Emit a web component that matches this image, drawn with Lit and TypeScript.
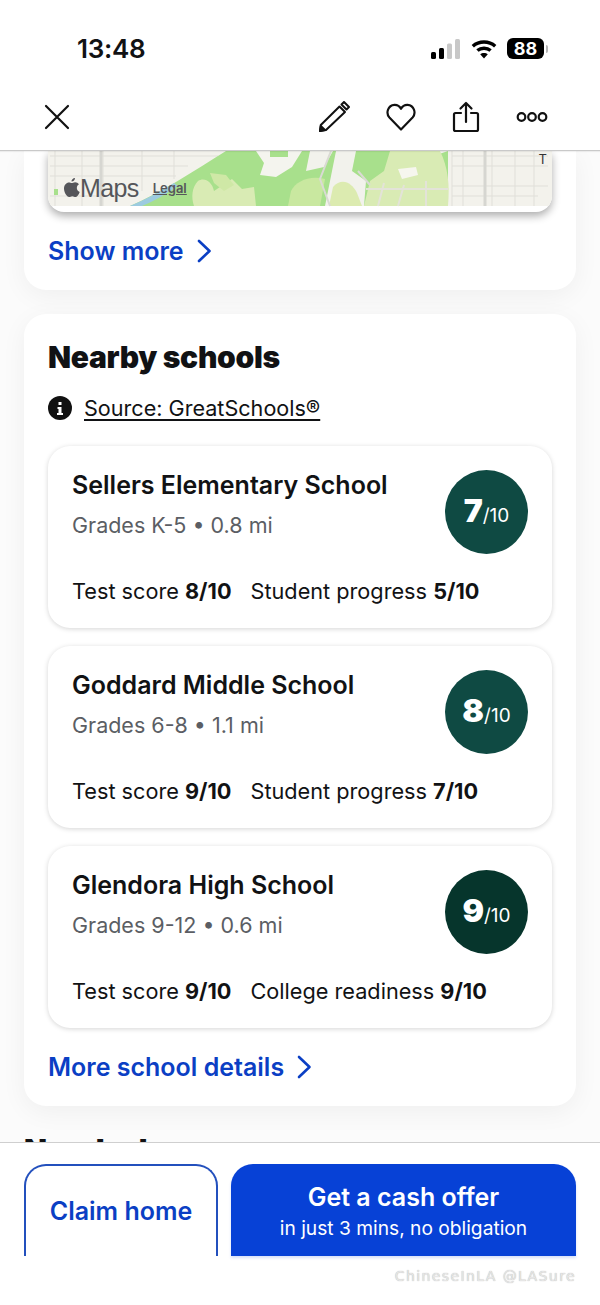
// app.ts
// Home listing page: nearby schools section with sticky action bar

import { LitElement, html, css, svg } from 'lit';
import { customElement } from 'lit/decorators.js';

interface School {
  name: string;
  meta: string;
  rating: number;
  color: string;
  stats: [string, string][];
}

const SCHOOLS: School[] = [
  {
    name: 'Sellers Elementary School',
    meta: 'Grades K-5 • 0.8 mi',
    rating: 7,
    color: '#0f4a43',
    stats: [['Test score', '8/10'], ['Student progress', '5/10']],
  },
  {
    name: 'Goddard Middle School',
    meta: 'Grades 6-8 • 1.1 mi',
    rating: 8,
    color: '#0f4a43',
    stats: [['Test score', '9/10'], ['Student progress', '7/10']],
  },
  {
    name: 'Glendora High School',
    meta: 'Grades 9-12 • 0.6 mi',
    rating: 9,
    color: '#06352c',
    stats: [['Test score', '9/10'], ['College readiness', '9/10']],
  },
];

const chevron = html`<svg class="chevron" width="16" height="24" viewBox="0 0 16 24" fill="none">
  <path d="M3 2l10.5 10L3 22" stroke="currentColor" stroke-width="2.6" stroke-linecap="round" stroke-linejoin="round" />
</svg>`;

// Map tile, just the big shapes and a road grid on both sides
const mapTile = svg`
  <rect width="504" height="55" fill="#f3f2ec" />
  <g stroke="#e0dfd9" stroke-width="1" fill="none">
    <path d="M7 0V55M34 0V55M55 0V55M94 0V40M126 0V28M2 5H170M2 15H140M2 25H128M2 45H60" />
    <path d="M404 0V55M415 0V55M444 0V55M467 0V55M486 0V55M404 5H500M404 15H500M404 35H500M404 45H490" />
  </g>
  <path d="M53 0V55M437 0V55" stroke="#d6d6d1" stroke-width="3" fill="none" />

  <path d="M82 55C112 42 146 20 178 0H342V20L400 0V55H82Z" fill="#a8e08c" />
  <path d="M342 0H392C400 16 402 34 400 55H316L322 30 336 20Z" fill="#d9ebb4" />
  <path d="M277 55L288 0H308L304 20 318 30 316 55Z" fill="#f2f2ec" />
  <path d="M208 0H222V6H240V0H254L244 16 228 26 212 24 216 12Z" fill="#f4f4ee" />
  <path d="M262 0H285L276 16 258 20Z" fill="#f2f2ec" />
  <path d="M285 36C294 26 304 32 309 42L314 55H281Z" fill="#dcebb0" />
  <path d="M150 30C156 26 164 30 166 40L184 28 194 38 206 36 208 55H146C143 46 144 36 150 30Z" fill="#d9ebb4" />
  <path d="M162 22L178 24 186 34 176 40 166 32Z" fill="#cfe8a6" />
  <path d="M243 40C248 30 262 24 277 28L272 55H240Z" fill="#c9e8a0" />
  <path d="M350 18L368 16 370 24 354 28Z" fill="#f6f6ee" />
  <path d="M318 38H400M336 32L330 55M356 34L350 55M378 30V55" stroke="#e3e3d8" stroke-width="2" fill="none" />
  <path d="M283 0L272 28 282 55M310 20L322 34" stroke="#dadad4" stroke-width="2" fill="none" />
  <path d="M82 55C96 49 112 41 126 32L130 35C118 43 106 50 94 55Z" fill="#9ccbe0" />
  <rect x="6" y="38" width="4" height="6" fill="#a8e08c" />
`;

@customElement('app-root')
export class AppRoot extends LitElement {
  static styles = css`
    :host {
      display: flex;
      flex-direction: column;
      width: 600px;
      height: 1305px;
      overflow: hidden;
      background: #fbfbfb;
      font-family: Inter, 'Liberation Sans', sans-serif;
      color: #111214;
    }

    /* Top chrome */
    .chrome {
      flex: none;
      background: #fff;
      border-bottom: 1px solid #c9c9c9;
      box-shadow: 0 1px 1px rgba(0, 0, 0, 0.06);
      position: relative;
      z-index: 2;
    }
    .status {
      height: 84px;
      padding: 13px 52px 0 77px;
      box-sizing: border-box;
      display: flex;
      align-items: center;
      justify-content: space-between;
    }
    .time {
      font-size: 26px;
      font-weight: 600;
      letter-spacing: -0.3px;
    }
    .status-icons {
      display: flex;
      align-items: center;
      gap: 10px;
    }
    .battery {
      display: flex;
      align-items: center;
      gap: 2px;
    }
    .battery-body {
      width: 37px;
      height: 21px;
      border-radius: 6px;
      background: #000;
      color: #fff;
      font-size: 18px;
      font-weight: 700;
      line-height: 21px;
      text-align: center;
    }
    .battery-nub {
      width: 2px;
      height: 8px;
      border-radius: 0 2px 2px 0;
      background: #b5b5b5;
    }
    .toolbar {
      height: 66px;
      padding: 0 52px 0 44px;
      box-sizing: border-box;
      display: flex;
      align-items: center;
      justify-content: space-between;
    }
    .actions {
      display: flex;
      align-items: center;
      gap: 36px;
    }
    .toolbar svg {
      display: block;
    }

    /* Scrolling content */
    .content {
      flex: 1;
      min-height: 0;
      overflow: hidden;
      padding: 0 24px;
    }
    .card {
      background: #fff;
      border-radius: 22px;
      box-shadow: 0 6px 26px rgba(0, 0, 0, 0.05);
      padding: 0 24px;
    }
    .card.map-card {
      height: 139px;
      border-radius: 0 0 22px 22px;
      box-sizing: border-box;
    }
    .map {
      position: relative;
      height: 61px;
      background: #fff;
      border-radius: 0 0 16px 16px;
      overflow: hidden;
      box-shadow: 0 4px 9px rgba(0, 0, 0, 0.32);
    }
    .map > svg {
      display: block;
    }
    .map-label {
      position: absolute;
      left: 15px;
      top: 22px;
      display: flex;
      align-items: center;
      color: #55565a;
    }
    .map-name {
      font-size: 25px;
      letter-spacing: -0.6px;
      font-family: 'Liberation Sans', sans-serif;
      line-height: 30px;
    }
    .map-legal {
      margin: 0 0 0 14px;
      font-size: 13px;
      font-weight: 600;
      text-decoration: underline;
    }
    .map-pin-label {
      position: absolute;
      right: 5px;
      top: 0;
      font-size: 13px;
      line-height: 16px;
      color: #333;
    }
    .link {
      display: flex;
      align-items: center;
      gap: 12px;
      color: #0b3fc4;
      font-size: 25px;
      font-weight: 600;
      line-height: 32px;
    }
    .map-card .link {
      margin-top: 23px;
    }

    .schools {
      margin-top: 24px;
      height: 792px;
      box-sizing: border-box;
      padding-top: 24px;
    }
    h2 {
      margin: 0;
      font-size: 30px;
      font-weight: 900;
      line-height: 38px;
      letter-spacing: -0.3px;
    }
    .source {
      display: flex;
      align-items: center;
      gap: 12px;
      margin-top: 18px;
      font-size: 21.6px;
      line-height: 28px;
    }
    .source span {
      text-decoration: underline;
      text-underline-offset: 3px;
    }
    .school-list {
      display: flex;
      flex-direction: column;
      gap: 18px;
      margin-top: 24px;
    }
    .school {
      height: 182px;
      box-sizing: border-box;
      padding: 24px 24px 0;
      border-radius: 22px;
      background: #fff;
      box-shadow: 0 1px 5px rgba(0, 0, 0, 0.17);
    }
    .school-top {
      display: flex;
      justify-content: space-between;
      align-items: flex-start;
    }
    .school-name {
      font-size: 25px;
      font-weight: 600;
      line-height: 30px;
    }
    .school-meta {
      margin-top: 10px;
      font-size: 21.5px;
      line-height: 30px;
      color: #5b5e64;
    }
    .badge {
      flex: none;
      width: 83px;
      height: 84px;
      border-radius: 50%;
      color: #fff;
      display: flex;
      align-items: baseline;
      justify-content: center;
      line-height: 82px;
    }
    .badge b {
      font-size: 32px;
      font-weight: 900;
    }
    .badge span {
      font-size: 19px;
    }
    .school-stats {
      display: flex;
      gap: 19px;
      margin-top: 22px;
      font-size: 21.7px;
      line-height: 30px;
    }
    .school-stats b {
      font-weight: 700;
    }
    .more {
      margin-top: 23px;
    }
    .next-title {
      margin-top: 25px;
    }

    /* Bottom action bar */
    .bar {
      flex: none;
      height: 163px;
      box-sizing: border-box;
      background: #fff;
      border-top: 1px solid #cfcfcf;
      padding: 21px 24px 0;
      position: relative;
      z-index: 2;
    }
    .bar-buttons {
      display: grid;
      grid-template-columns: 194px 345px;
      gap: 13px;
    }
    .btn {
      height: 92px;
      box-sizing: border-box;
      border-radius: 22px 22px 0 0;
      display: flex;
      flex-direction: column;
      align-items: center;
      justify-content: center;
    }
    .btn.outline {
      border: 2px solid #2350bd;
      border-bottom: 0;
      color: #0b3fc4;
      font-size: 25px;
      font-weight: 600;
    }
    .btn.solid {
      background: #0741d6;
      color: #fff;
      padding-top: 1px;
      box-shadow: 0 2px 3px rgba(7, 65, 214, 0.16);
    }
    .btn-title {
      font-size: 25px;
      font-weight: 600;
      line-height: 32px;
    }
    .btn-sub {
      margin-top: 2px;
      font-size: 19.2px;
      line-height: 26px;
    }
    .watermark {
      margin-top: 10px;
      text-align: right;
      font-family: 'DejaVu Sans', sans-serif;
      font-size: 14px;
      line-height: 20px;
      letter-spacing: 1.4px;
      color: #e6e6e6;
      text-shadow: 0 0 1px #a8a8a8;
    }
  `;

  private renderStatusBar() {
    return html`
      <div class="status">
        <div class="time">13:48</div>
        <div class="status-icons">
          <svg width="30" height="20" viewBox="0 0 30 20">
            <rect x="0" y="13" width="5" height="7" rx="1.5" fill="#000" />
            <rect x="8" y="9" width="5" height="11" rx="1.5" fill="#000" />
            <rect x="16" y="4.5" width="5" height="15.5" rx="1.5" fill="#c8c8c8" />
            <rect x="24" y="0" width="5" height="20" rx="1.5" fill="#c8c8c8" />
          </svg>
          <svg width="26" height="20" viewBox="0 0 26 20" fill="none" stroke="#000" stroke-width="3.4">
            <path d="M1.8 7.2C8 1.6 18 1.6 24.2 7.2" />
            <path d="M6.4 11.6C10 8.4 16 8.4 19.6 11.6" />
            <path d="M13 19.6L9.2 15.2C11.2 13.6 14.8 13.6 16.8 15.2Z" fill="#000" stroke="none" />
          </svg>
          <div class="battery">
            <div class="battery-body">88</div>
            <div class="battery-nub"></div>
          </div>
        </div>
      </div>
    `;
  }

  private renderToolbar() {
    return html`
      <div class="toolbar">
        <svg width="26" height="26" viewBox="0 0 26 26" fill="none" stroke="#111" stroke-width="2.2" stroke-linecap="round">
          <path d="M2 2l22 22M24 2L2 24" />
        </svg>
        <div class="actions">
          <svg width="32" height="32" viewBox="0 0 32 32" fill="none" stroke="#111" stroke-width="2" stroke-linejoin="round">
            <path d="M2 30l.8-6L21.5 5.500 27 11 8 29z" />
            <path d="M23.500 3.500L26 1l5 5-2.500 2.500z" />
            <path d="M2 30l.8-5 4.200 4z" fill="#111" />
          </svg>
          <svg width="30" height="28" viewBox="0 0 32 30" fill="none" stroke="#111" stroke-width="2.300" stroke-linejoin="round">
            <path d="M16 28.500L3.600 15.600C-.6 10.800 2 2.400 9 2c3.200-.1 5.600 1.500 7 4.200C17.400 3.500 19.800 1.900 23 2c7 .4 9.600 8.800 5.400 13.600z" />
          </svg>
          <svg width="28" height="32" viewBox="0 0 28 32" fill="none" stroke="#111" stroke-width="2.200" stroke-linecap="round" stroke-linejoin="round">
            <path d="M9 12H3.500a1.500 1.500 0 0 0-1.500 1.500v15A1.500 1.500 0 0 0 3.500 30h21a1.500 1.500 0 0 0 1.500-1.500v-15a1.500 1.500 0 0 0-1.500-1.500H19" />
            <path d="M14 21V2M8.500 7.500L14 2l5.500 5.500" />
          </svg>
          <svg width="32" height="12" viewBox="0 0 32 12" fill="none" stroke="#111" stroke-width="2.200">
            <circle cx="5.500" cy="6" r="3.800" />
            <circle cx="16" cy="6" r="3.800" />
            <circle cx="26.500" cy="6" r="3.800" />
          </svg>
        </div>
      </div>
    `;
  }

  private renderMapCard() {
    return html`
      <section class="card map-card">
        <div class="map">
          <svg width="504" height="61" viewBox="0 0 504 61">${mapTile}</svg>
          <div class="map-label">
            <svg width="17" height="22" viewBox="0 0 17 22" fill="currentColor">
              <path d="M12 1c.1 1.800-1.500 3.700-3.500 3.600C8.300 2.800 10 1.100 12 1zM8.600 6c1 0 2-.8 3.500-.8 1.500 0 3 .8 3.900 2.100-3.200 1.900-2.700 6.300.7 7.600-.7 2-2.400 5.100-4.200 5.100-1.200 0-1.700-.8-3.200-.8s-2 .8-3.200.8C3.900 20 1 15.600 1 11.600 1 7.700 3.500 5.400 6 5.400c1.100 0 1.900.6 2.600.6z" />
            </svg>
            <span class="map-name">Maps</span>
            <span class="map-legal">Legal</span>
          </div>
          <span class="map-pin-label">T</span>
        </div>
        <div class="link">Show more ${chevron}</div>
      </section>
    `;
  }

  private renderSchool(school: School) {
    return html`
      <article class="school">
        <div class="school-top">
          <div>
            <div class="school-name">${school.name}</div>
            <div class="school-meta">${school.meta}</div>
          </div>
          <div class="badge" style="background: ${school.color}">
            <b>${school.rating}</b><span>/10</span>
          </div>
        </div>
        <div class="school-stats">
          ${school.stats.map(([label, value]) => html`<div>${label} <b>${value}</b></div>`)}
        </div>
      </article>
    `;
  }

  render() {
    return html`
      <header class="chrome">
        ${this.renderStatusBar()}
        ${this.renderToolbar()}
      </header>

      <main class="content">
        ${this.renderMapCard()}
        <section class="card schools">
          <h2>Nearby schools</h2>
          <div class="source">
            <svg width="24" height="24" viewBox="0 0 24 24">
              <circle cx="12" cy="12" r="12" fill="#111" />
              <path d="M10.500 6h3v3h-3zM9.500 11h4v6h1.500v2H9v-2h1.500v-4h-1z" fill="#fff" />
            </svg>
            <span>Source: GreatSchools®</span>
          </div>
          <div class="school-list">
            ${SCHOOLS.map(school => this.renderSchool(school))}
          </div>
          <div class="link more">More school details ${chevron}</div>
        </section>
        <h2 class="next-title">Nearby homes</h2>
      </main>

      <footer class="bar">
        <div class="bar-buttons">
          <div class="btn outline">Claim home</div>
          <div class="btn solid">
            <div class="btn-title">Get a cash offer</div>
            <div class="btn-sub">in just 3 mins, no obligation</div>
          </div>
        </div>
        <div class="watermark">ChineseInLA @LASure</div>
      </footer>
    `;
  }
}

declare global {
  interface HTMLElementTagNameMap {
    'app-root': AppRoot;
  }
}
